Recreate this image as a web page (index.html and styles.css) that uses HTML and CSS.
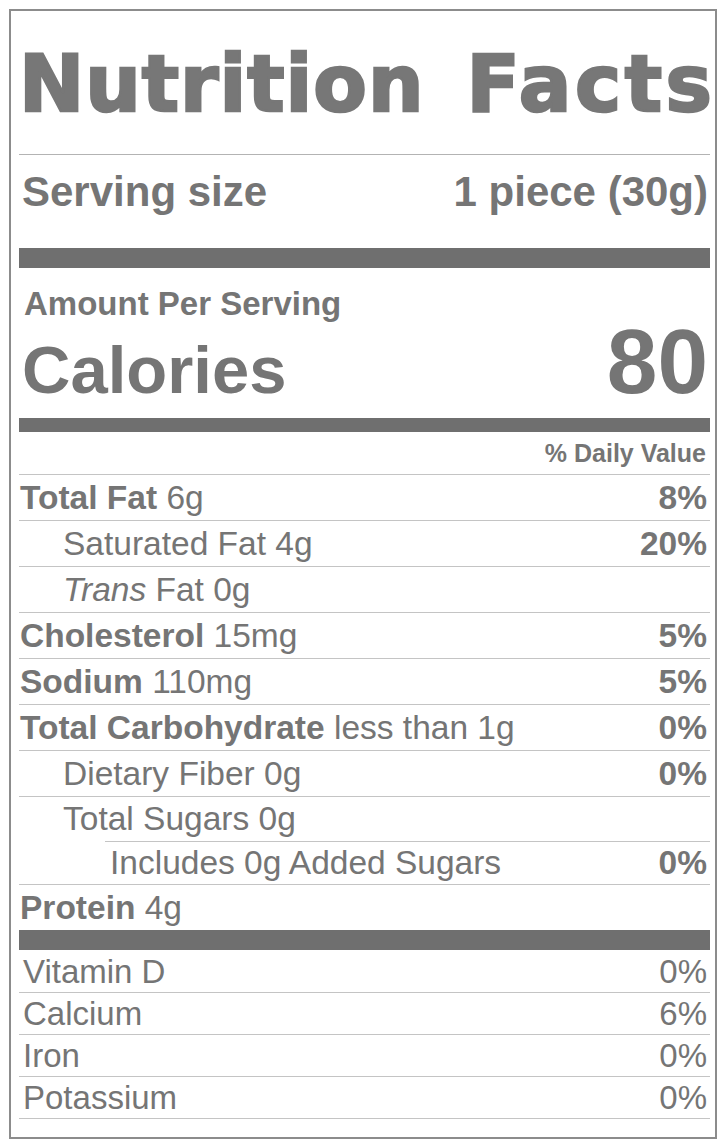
FILE: index.html
```html
<!DOCTYPE html>
<html lang="en">
<head>
  <meta charset="UTF-8" />
  <meta name="viewport" content="width=device-width, initial-scale=1.0" />
  <title>Nutrition Facts</title>
  <link rel="stylesheet" href="styles.css">
</head>
<body>
  <section class="label" aria-label="Nutrition Facts">
    <h1 class="title">Nutrition <span class="title-wide">Facts</span></h1>

    <div class="serving">
      <span>Serving size</span>
      <span>1 piece (30g)</span>
    </div>
    <div class="bar bar-thick"></div>

    <div class="amount">Amount Per Serving</div>
    <div class="calories">
      <span>Calories</span>
      <span class="cal-value">80</span>
    </div>
    <div class="bar bar-mid"></div>

    <div class="dv-head">% Daily Value</div>

    <ul class="nutrients">
      <li class="row"><span><b>Total Fat</b> 6g</span><b>8%</b></li>
      <li class="row sub"><span>Saturated Fat 4g</span><b>20%</b></li>
      <li class="row sub"><span><i>Trans</i> Fat 0g</span></li>
      <li class="row"><span><b>Cholesterol</b> 15mg</span><b>5%</b></li>
      <li class="row"><span><b>Sodium</b> 110mg</span><b>5%</b></li>
      <li class="row"><span><b>Total Carbohydrate</b> less than 1g</span><b>0%</b></li>
      <li class="row sub"><span>Dietary Fiber 0g</span><b>0%</b></li>
      <li class="row sub sugars"><span>Total Sugars 0g</span></li>
      <li class="row added"><span>Includes 0g Added Sugars</span><b>0%</b></li>
      <li class="row protein"><span><b>Protein</b> 4g</span></li>
    </ul>
    <div class="bar bar-thick"></div>

    <ul class="vitamins">
      <li class="vit"><span>Vitamin D</span><span>0%</span></li>
      <li class="vit"><span>Calcium</span><span>6%</span></li>
      <li class="vit"><span>Iron</span><span>0%</span></li>
      <li class="vit"><span>Potassium</span><span>0%</span></li>
    </ul>
  </section>
</body>
</html>
```

FILE: styles.css
```css
* { box-sizing: border-box; }
body {
  margin: 0;
  background: #ffffff;
  font-family: 'Liberation Sans', Arial, sans-serif;
  color: #757575;
}
.label {
  width: 708px;
  margin: 9px 0 8px 9px;
  border: 2px solid #8c8c8c;
  padding: 0 5px 18px 8px;
}
.title {
  margin: 0;
  padding-top: 4px;
  font-family: 'DejaVu Sans', sans-serif;
  font-weight: bold;
  font-size: 78px;
  line-height: 139px;
  letter-spacing: 1px;
  word-spacing: 14px;
  white-space: nowrap;
  color: #777777;
  -webkit-text-stroke: 2.5px #777777;
  border-bottom: 1px solid #b3b3b3;
}
.title-wide {
  letter-spacing: 3.5px;
}
.serving {
  display: flex;
  justify-content: space-between;
  padding: 0 2px 19px 3px;
  font-size: 42px;
  font-weight: bold;
  line-height: 74px;
}
.bar {
  background: #6f6f6f;
}
.bar-thick { height: 20px; }
.bar-mid { height: 14px; }
.amount {
  padding: 18px 0 0 5px;
  font-size: 33px;
  font-weight: bold;
  line-height: 36px;
}
.calories {
  display: flex;
  justify-content: space-between;
  align-items: baseline;
  padding: 0 2px 8px 3px;
  font-weight: bold;
  font-size: 67px;
  line-height: 80px;
}
.cal-value {
  font-size: 91px;
}
.dv-head {
  padding-right: 4px;
  text-align: right;
  font-size: 25px;
  font-weight: bold;
  line-height: 42px;
}
.nutrients,
.vitamins {
  list-style: none;
  margin: 0;
  padding: 0;
}
.vitamins {
  padding-top: 1px;
}
.row {
  display: flex;
  justify-content: space-between;
  padding: 0 3px 0 1px;
  border-top: 1px solid #c4c4c4;
  font-size: 33.5px;
  line-height: 45px;
  white-space: nowrap;
}
.row b { font-weight: bold; }
.row i { font-style: italic; }
.row.sub { padding-left: 44px; }
.row.sugars { line-height: 44px; }
.row.added {
  margin-left: 86px;
  padding-left: 5px;
  line-height: 42px;
}
.vit {
  display: flex;
  justify-content: space-between;
  padding: 0 3px 0 4px;
  border-bottom: 1px solid #c4c4c4;
  font-size: 33px;
  line-height: 41px;
}
```
